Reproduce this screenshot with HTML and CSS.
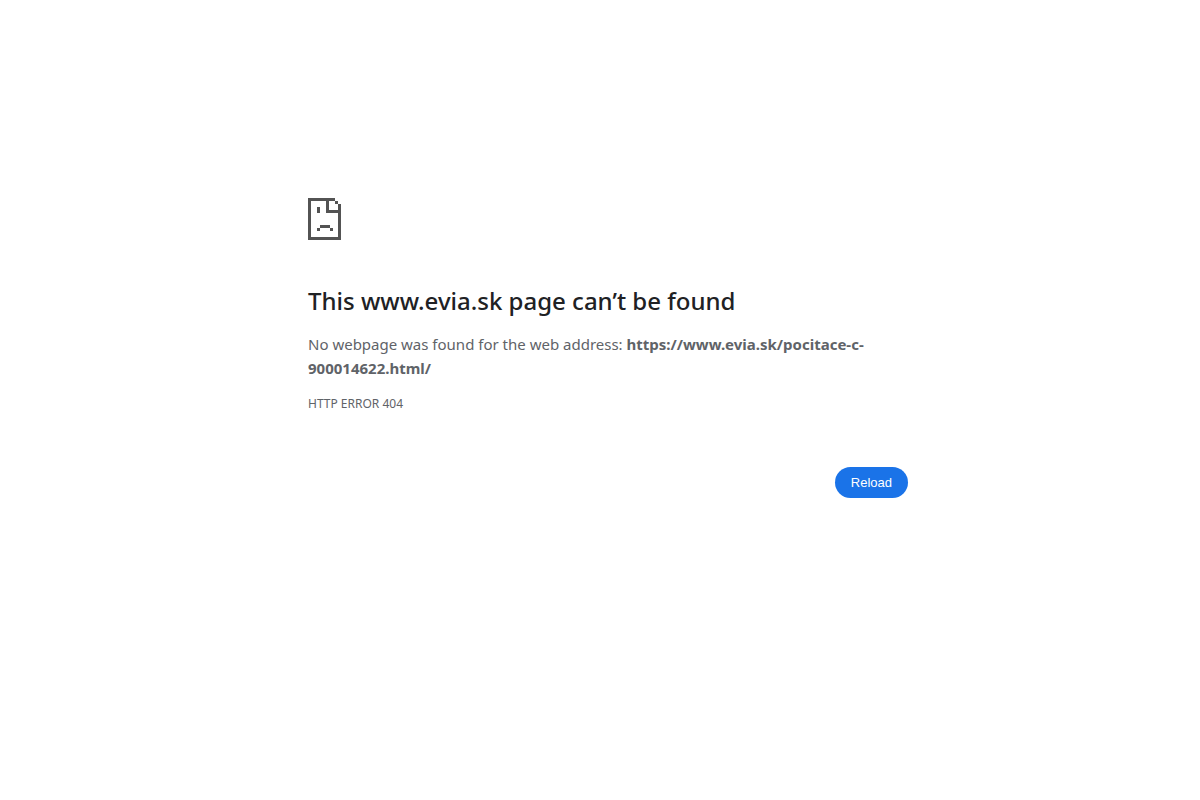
FILE: index.html
```html
<!DOCTYPE html>
<html lang="en">
<head>
    <meta charset="UTF-8">
    <meta name="viewport" content="width=device-width, initial-scale=1.0">
    <title>www.evia.sk</title>
    <link rel="stylesheet" href="styles.css">
</head>
<body>
    <main class="interstitial">
        <svg class="icon" viewBox="0 0 33 42" shape-rendering="crispEdges" aria-hidden="true">
            <path d="M0 0h27v3H3v36h27V15H18V3h3v9h9V6h3v36H0z M27 3h3v3h-3z M9 9h3v6H9z M12 27h10v3H12z M9 30h3v3H9z M22 30h3v3h-3z"/>
        </svg>
        <h1>This www.evia.sk page can’t be found</h1>
        <p class="summary">No webpage was found for the web address: <strong>https://www.evia.sk/pocitace-c-900014622.html/</strong></p>
        <div class="error-code">HTTP ERROR 404</div>
        <div class="nav-wrapper">
            <button id="reloadButton" class="reload-button" type="button">Reload</button>
        </div>
    </main>

    <script>
        document.getElementById('reloadButton').addEventListener('click', () => {
            location.reload();
        });
    </script>
</body>
</html>
```

FILE: styles.css
```css
body {
    margin: 0;
    padding-left: 16px;
    background-color: #fff;
    color: #5f6368;
    font-family: "Noto Sans", sans-serif;
    font-size: 15px;
    line-height: 24px;
}

.interstitial {
    max-width: 600px;
    margin: 0 auto;
    padding-top: 198px;
}

.icon {
    display: block;
    width: 33px;
    height: 42px;
    margin-bottom: 46px;
    fill: #535353;
}

h1 {
    margin: 0 0 16px;
    color: #202124;
    font-size: 24px;
    font-weight: 500;
    line-height: 30px;
}

.summary {
    margin: 0 0 12px;
}

.error-code {
    font-size: 12px;
}

.nav-wrapper {
    display: flex;
    justify-content: flex-end;
    margin-top: 51px;
}

.reload-button {
    padding: 8px 16px;
    border: 0;
    border-radius: 20px;
    background-color: #1a73e8;
    color: #fff;
    font-family: "Liberation Sans", Arial, sans-serif;
    font-size: 13px;
    line-height: 15px;
    cursor: pointer;
}

.reload-button:hover {
    background-color: #1967d2;
}
```
